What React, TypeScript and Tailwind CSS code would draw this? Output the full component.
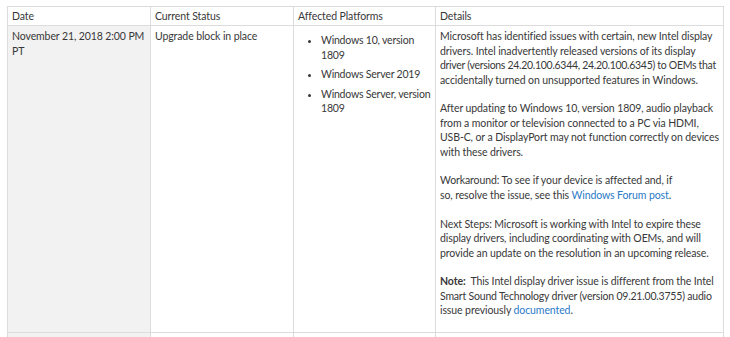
const link = "text-[#2a7ac7]";

export default function App() {
  const cell = "border border-[#dcdcdc] align-top px-[4px]";
  return (
    <div className="w-[730px] h-[337px] overflow-hidden bg-white pt-[6px] pl-[7px] font-['Lato',sans-serif] text-[10.5px] leading-[14.4px] tracking-[-0.1px] text-[#383838]">
      <table className="border-collapse table-fixed w-[716px]">
        <colgroup>
          <col className="w-[143px]" />
          <col className="w-[143px]" />
          <col className="w-[142px]" />
          <col className="w-[288px]" />
        </colgroup>
        <thead>
          <tr className="text-left">
            <th className={`${cell} py-[2px] font-normal`}>Date</th>
            <th className={`${cell} py-[2px] font-normal`}>Current Status</th>
            <th className={`${cell} py-[2px] font-normal`}>Affected Platforms</th>
            <th className={`${cell} py-[2px] font-normal`}>Details</th>
          </tr>
        </thead>
        <tbody>
          <tr>
            <td className={`${cell} py-[3px] bg-[#f2f2f2] h-[307px] whitespace-nowrap`}>
              November 21, 2018 2:00 PM
              <br />
              PT
            </td>
            <td className={`${cell} py-[3px]`}>Upgrade block in place</td>
            <td className={`${cell} py-[3px]`}>
              <ul className="list-disc pl-[23px] mt-[4px] space-y-[5px] whitespace-nowrap tracking-[-0.2px]">
                <li>
                  Windows 10, version
                  <br />
                  1809
                </li>
                <li>Windows Server 2019</li>
                <li>
                  Windows Server, version
                  <br />
                  1809
                </li>
              </ul>
            </td>
            <td className={`${cell} py-[3px] whitespace-nowrap`}>
              Microsoft has identified issues with certain, new Intel display
              <br />
              drivers. Intel inadvertently released versions of its display
              <br />
              <span className="tracking-[-0.3px]">driver (versions 24.20.100.6344, 24.20.100.6345) to OEMs that</span>
              <br />
              accidentally turned on unsupported features in Windows.
              <br />
              <br />
              After updating to Windows 10, version 1809, audio playback
              <br />
              from a monitor or television connected to a PC via HDMI,
              <br />
              USB-C, or a DisplayPort may not function correctly on devices
              <br />
              with these drivers.
              <br />
              <br />
              Workaround: To see if your device is affected and, if
              <br />
              so, resolve the issue, see this <a className={link}>Windows Forum post</a>.
              <br />
              <br />
              Next Steps: Microsoft is working with Intel to expire these
              <br />
              display drivers, including coordinating with OEMs, and will
              <br />
              provide an update on the resolution in an upcoming release.
              <br />
              <br />
              <b className="font-bold">Note:</b>&nbsp; This Intel display driver issue is different from the Intel
              <br />
              <span className="tracking-[-0.2px]">Smart Sound Technology driver (version 09.21.00.3755) audio</span>
              <br />
              issue previously <a className={link}>documented</a>.
            </td>
          </tr>
          <tr>
            <td className={`${cell} bg-[#f2f2f2] h-[20px]`}></td>
            <td className={cell}></td>
            <td className={cell}></td>
            <td className={cell}></td>
          </tr>
        </tbody>
      </table>
    </div>
  );
}
